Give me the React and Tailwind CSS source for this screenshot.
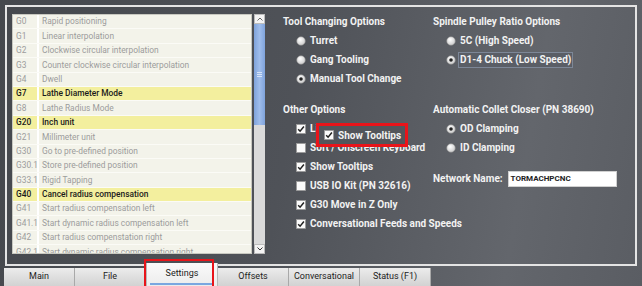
import React from 'react';

const gcodes = [
  ['G0', 'Rapid positioning', false],
  ['G1', 'Linear interpolation', false],
  ['G2', 'Clockwise circular interpolation', false],
  ['G3', 'Counter clockwise circular interpolation', false],
  ['G4', 'Dwell', false],
  ['G7', 'Lathe Diameter Mode', true],
  ['G8', 'Lathe Radius Mode', false],
  ['G20', 'Inch unit', true],
  ['G21', 'Millimeter unit', false],
  ['G30', 'Go to pre-defined position', false],
  ['G30.1', 'Store pre-defined position', false],
  ['G33.1', 'Rigid Tapping', false],
  ['G40', 'Cancel radius compensation', true],
  ['G41', 'Start radius compensation left', false],
  ['G41.1', 'Start dynamic radius compensation left', false],
  ['G42', 'Start radius compenstation right', false],
  ['G42.1', 'Start dynamic radius compensation right', false],
];

const tabs = ['Main', 'File', 'Settings', 'Offsets', 'Conversational', 'Status (F1)'];

function Radio({ checked }) {
  return (
    <svg width="10" height="10" viewBox="0 0 10 10" className="shrink-0">
      <defs>
        <radialGradient id="rg" cx="40%" cy="35%" r="70%">
          <stop offset="0%" stopColor="#ffffff" />
          <stop offset="100%" stopColor="#c9c9c9" />
        </radialGradient>
      </defs>
      <circle cx="5" cy="5" r="4.3" fill="url(#rg)" stroke="#8a8a8a" strokeWidth="0.6" />
      {checked && <circle cx="5" cy="5" r="1.8" fill="#222" />}
    </svg>
  );
}

function Check({ checked }) {
  return (
    <svg width="10" height="10" viewBox="0 0 10 10" className="shrink-0">
      <rect x="0.5" y="0.5" width="9" height="9" fill="#fbfbfb" stroke="#9a9a9a" strokeWidth="0.8" />
      {checked && <path d="M2.2 5.2 L4.1 7.2 L7.9 2.6" fill="none" stroke="#222" strokeWidth="1.5" />}
    </svg>
  );
}

function Row({ children, className = '' }) {
  return <div className={`h-[19px] flex items-center ${className}`}>{children}</div>;
}

function RadioRow({ label, checked, focus }) {
  return (
    <Row className="pl-[13px] gap-[4px]">
      <Radio checked={checked} />
      <span className={focus ? 'border border-[#7d8797] bg-[#5a5e66] px-[1px] h-[16px] flex items-center -ml-[2px]' : ''}>
        {label}
      </span>
    </Row>
  );
}

function CheckRow({ label, checked }) {
  return (
    <Row className="pl-[13px] gap-[4px]">
      <Check checked={checked} />
      <span className="whitespace-nowrap">{label}</span>
    </Row>
  );
}

export default function App() {
  return (
    <div
      className="relative w-[642px] h-[286px] overflow-hidden flex flex-col bg-[linear-gradient(100deg,#45484d_0%,#4f5258_45%,#63666c_80%,#5a5d63_100%)]"
      style={{ fontFamily: 'Roboto, "Liberation Sans", sans-serif' }}
    >
      {/* Settings frame */}
      <div className="mt-[5px] mx-[5px] h-[261px] border-2 border-[#e4e4e4] flex">
        {/* G-code list */}
        <div className="mt-[7px] ml-[5px] flex h-[240px]">
          <div className="w-[240px] h-[240px] bg-[#f3f3ea] border border-[#c8c8c0] overflow-hidden">
            {gcodes.map(([code, desc, on]) => (
              <div
                key={code}
                className={`flex h-[14.4px] items-center text-[8.4px] border-b border-[#fbfbf6] ${on ? 'bg-[#f3ef9e] text-[#1a1a1a] font-medium' : 'text-[#9c9c9c]'}`}
              >
                <span className="w-[26px] h-full flex items-center pl-[3px] border-r-2 border-white">{code}</span>
                <span className="pl-[3px] whitespace-nowrap">{desc}</span>
              </div>
            ))}
          </div>
          {/* scrollbar */}
          <div className="ml-[2px] w-[11px] h-[240px] flex flex-col bg-[#dadada]">
            <div className="h-[10px] bg-[#f4f4f4] border border-[#bcbcbc] flex items-center justify-center">
              <svg width="6" height="4" viewBox="0 0 6 4"><path d="M0.5 3.5 L3 1 L5.5 3.5" fill="none" stroke="#666" strokeWidth="1" /></svg>
            </div>
            <div className="h-[101px] bg-[linear-gradient(90deg,#7fa3db,#9fbdeb,#7fa3db)] flex items-center justify-center">
              <div className="w-[5px] flex flex-col gap-[1px]">
                <div className="h-px bg-[#d7e3f7]" />
                <div className="h-px bg-[#d7e3f7]" />
                <div className="h-px bg-[#d7e3f7]" />
              </div>
            </div>
            <div className="flex-1" />
            <div className="h-[10px] bg-[#f4f4f4] border border-[#bcbcbc] flex items-center justify-center">
              <svg width="6" height="4" viewBox="0 0 6 4"><path d="M0.5 0.5 L3 3 L5.5 0.5" fill="none" stroke="#333" strokeWidth="1" /></svg>
            </div>
          </div>
        </div>

        {/* Options */}
        <div className="ml-[18px] pt-[5px] flex text-[10px] font-bold text-[#f2f2f2]">
          <div className="w-[150px] flex flex-col">
            <Row>Tool Changing Options</Row>
            <RadioRow label="Turret" />
            <RadioRow label="Gang Tooling" />
            <RadioRow label="Manual Tool Change" checked />
            <div className="h-[12px]" />
            <Row>Other Options</Row>
            <CheckRow label="Limit Switches" checked />
            <CheckRow label="Soft / Onscreen Keyboard" />
            <CheckRow label="Show Tooltips" checked />
            <CheckRow label="USB IO Kit (PN 32616)" />
            <CheckRow label="G30 Move in Z Only" checked />
            <CheckRow label="Conversational Feeds and Speeds" checked />
          </div>
          <div className="flex flex-col">
            <Row>Spindle Pulley Ratio Options</Row>
            <RadioRow label="5C (High Speed)" />
            <RadioRow label="D1-4 Chuck (Low Speed)" checked focus />
            <Row />
            <div className="h-[12px]" />
            <Row>Automatic Collet Closer (PN 38690)</Row>
            <RadioRow label="OD Clamping" checked />
            <RadioRow label="ID Clamping" />
            <div className="h-[12px]" />
            <Row className="gap-[5px]">
              <span>Network Name:</span>
              <div className="w-[109px] h-[16px] bg-white border border-[#d0d0d0] flex items-center pl-[2px] text-[8px] text-[#222] font-bold">
                TORMACHPCNC
              </div>
            </Row>
          </div>
        </div>
      </div>

      {/* Tabs */}
      <div className="ml-[4px] mt-[1px] flex items-end h-[19px]">
        {tabs.map((t) => {
          const active = t === 'Settings';
          return active ? (
            <div key={t} className="w-[72px] h-[23px] -mt-[4px] bg-[linear-gradient(#fafafa,#ececec)] border-x border-[#b8b8b8] flex flex-col items-center justify-end text-[9px] text-[#222]">
              <span className="mb-[3px]">{t}</span>
              <div className="w-[64px] h-[2px] bg-[#7aa7e0] mb-px" />
            </div>
          ) : (
            <div key={t} className="w-[71px] h-[18px] bg-[linear-gradient(#ececec,#d2d2d2)] border-r border-[#a9a9a9] flex items-center justify-center text-[9px] text-[#222]">
              {t}
            </div>
          );
        })}
      </div>

      {/* Callout overlays */}
      <div className="absolute left-[316px] top-[123px] w-[92px] h-[24px] border-[3px] border-[#e8141a] bg-[#52555b] flex items-center pl-[5px] gap-[4px] text-[10px] font-bold text-[#f2f2f2]">
        <Check checked />
        <span>Show Tooltips</span>
      </div>
      <div className="absolute left-[144px] top-[259px] w-[70px] h-[30px] border-2 border-[#e8141a]" />
    </div>
  );
}
